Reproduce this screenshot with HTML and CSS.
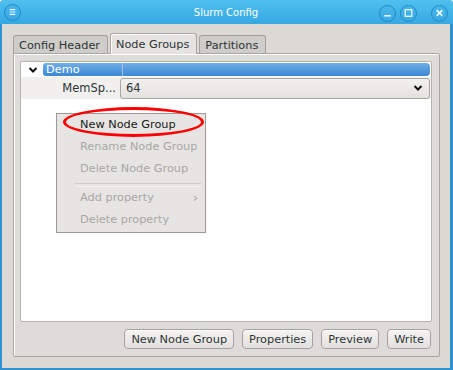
FILE: index.html
```html
<!DOCTYPE html>
<html lang="en">
<head>
    <meta charset="UTF-8">
    <title>Slurm Config</title>
    <link rel="stylesheet" href="styles.css">
</head>
<body>
    <div class="window">
        <div class="titlebar">
            <div class="tb-left">
                <span class="tb-btn">
                    <svg width="16" height="16" viewBox="0 0 16 16">
                        <path d="M5 5.5h6M5 8h6M5 10.5h6" stroke="#e8f6fd" stroke-width="1.3"/>
                    </svg>
                </span>
            </div>
            <div class="title">Slurm Config</div>
            <div class="tb-right">
                <span class="tb-btn">
                    <svg width="16" height="16" viewBox="0 0 16 16">
                        <path d="M4.5 11h7" stroke="#f2fafe" stroke-width="1.6"/>
                    </svg>
                </span>
                <span class="tb-btn">
                    <svg width="16" height="16" viewBox="0 0 16 16">
                        <rect x="4.5" y="4.5" width="7" height="7" fill="none" stroke="#f2fafe" stroke-width="1.3"/>
                    </svg>
                </span>
                <span class="tb-btn close">
                    <svg width="16" height="16" viewBox="0 0 16 16">
                        <path d="M5 5l6 6M11 5l-6 6" stroke="#f2fafe" stroke-width="1.7"/>
                    </svg>
                </span>
            </div>
        </div>

        <div class="content">
            <div class="tabs">
                <div class="tab">Config Header</div>
                <div class="tab active">Node Groups</div>
                <div class="tab">Partitions</div>
            </div>
            <div class="panel">
                <div class="tree">
                    <div class="row group-row">
                        <span class="expander">
                            <svg width="10" height="8" viewBox="0 0 10 8">
                                <path d="M1.5 2l3.5 3.5L8.5 2" fill="none" stroke="#111" stroke-width="2"/>
                            </svg>
                        </span>
                        <span class="group-name">Demo</span>
                        <span class="group-value"></span>
                    </div>
                    <div class="row prop-row">
                        <span class="prop-name">MemSp...</span>
                        <div class="combo">
                            <span>64</span>
                            <svg width="10" height="8" viewBox="0 0 10 8">
                                <path d="M1.5 2l3.5 3.5L8.5 2" fill="none" stroke="#111" stroke-width="2"/>
                            </svg>
                        </div>
                    </div>
                </div>
                <div class="actions">
                    <button class="btn">New Node Group</button>
                    <button class="btn">Properties</button>
                    <button class="btn">Preview</button>
                    <button class="btn">Write</button>
                </div>
            </div>
        </div>

        <!-- popup menu -->
        <div class="menu">
            <div class="menu-item">New Node Group</div>
            <div class="menu-item disabled">Rename Node Group</div>
            <div class="menu-item disabled">Delete Node Group</div>
            <div class="menu-sep"></div>
            <div class="menu-item disabled">Add property <span class="sub-arrow">&#8250;</span></div>
            <div class="menu-item disabled">Delete property</div>
        </div>
        <div class="highlight"></div>
    </div>
</body>
</html>
```

FILE: styles.css
```css
/* Reset */
* {
    margin: 0;
    padding: 0;
    box-sizing: border-box;
}

body {
    font-family: "DejaVu Sans", sans-serif;
    font-size: 11.3px;
    color: #2e3436;
    background: #ffffff;
}

/* Window frame */
.window {
    position: relative;
    width: 453px;
    height: 370px;
    display: flex;
    flex-direction: column;
    background: #2f93d2;
    padding: 0 3px 2px 2px;
    border-radius: 4px 4px 0 0;
}

.titlebar {
    height: 24px;
    margin: 0 -3px 0 -2px;
    padding: 0 3px 0 2px;
    display: grid;
    grid-template-columns: 1fr auto 1fr;
    align-items: center;
    background: linear-gradient(#50c0f0, #36a8e2);
    border-radius: 4px 4px 0 0;
}

.title {
    color: #ffffff;
    font-size: 10px;
    padding-top: 1px;
}

.tb-left {
    display: flex;
    padding-left: 2px;
}

.tb-right {
    display: flex;
    justify-content: flex-end;
    gap: 4px;
    padding-right: 2px;
    padding-top: 2px;
}

.tb-btn {
    width: 17px;
    height: 17px;
    border-radius: 50%;
    border: 1px solid #2486c2;
    background: linear-gradient(#47b6ea, #3aa9e2);
    display: flex;
    align-items: center;
    justify-content: center;
}

.tb-btn.close {
    margin-left: 10px;
}

/* Window body */
.content {
    flex: 1;
    background: #dcdad5;
    padding: 9px 10px 11px 11px;
    display: flex;
    flex-direction: column;
}

/* Notebook tabs */
.tabs {
    display: flex;
    align-items: flex-end;
    gap: 2px;
    height: 20px;
}

.tab {
    height: 18px;
    padding: 2px 7px 0 5px;
    background: #cfcdc9;
    border: 1px solid #a3a09b;
    border-bottom: none;
    border-radius: 3px 3px 0 0;
    line-height: 15px;
}

.tab.active {
    height: 21px;
    margin-bottom: -1px;
    padding-top: 3px;
    background: #e4e3e0;
    border-color: #a8a6a2;
    position: relative;
    z-index: 1;
    box-shadow: inset 1px 1px 0 #ffffff;
    line-height: 15px;
}

.panel {
    flex: 1;
    border: 1px solid #a8a6a2;
    border-radius: 0 2px 2px 2px;
    box-shadow: inset 1px 1px 0 #ffffff;
    background: #dedcd8;
    padding: 7px 7px 7px 6px;
    display: flex;
    flex-direction: column;
}

/* Tree view */
.tree {
    flex: 1;
    background: #ffffff;
    border: 1px solid #b5b3ae;
    border-radius: 2px;
    padding: 1px 1px 0 1px;
}

.row {
    display: flex;
    align-items: center;
}

.group-row {
    height: 13px;
}

.expander {
    width: 21px;
    display: flex;
    justify-content: center;
    padding-top: 1px;
}

.group-name {
    width: 80px;
    height: 13px;
    color: #ffffff;
    line-height: 13px;
    padding-left: 3px;
    background: linear-gradient(#70aee9, #3d86d1);
    border-radius: 3px 0 0 3px;
    border-right: 1px solid #9cc4ec;
}

.group-value {
    flex: 1;
    height: 13px;
    background: linear-gradient(#70aee9, #3d86d1);
    border-radius: 0 4px 4px 0;
}

.prop-row {
    height: 22px;
    margin: 1px -1px 0 -1px;
    background: #f1f0ef;
    padding-right: 1px;
}

.prop-name {
    width: 99px;
    text-align: right;
    padding-right: 4px;
    font-size: 11.5px;
}

.combo {
    flex: 1;
    height: 21px;
    display: flex;
    align-items: center;
    justify-content: space-between;
    padding: 0 6px 0 5px;
    border: 1px solid #a9a7a3;
    border-radius: 3px;
    background: linear-gradient(#f2f1f0, #e3e2df);
    font-size: 11.5px;
}

/* Bottom buttons */
.actions {
    display: flex;
    justify-content: flex-end;
    gap: 8px;
    padding-top: 7px;
    padding-right: 1px;
}

.btn {
    font-family: "DejaVu Sans", sans-serif;
    font-size: 11.3px;
    color: #2e3436;
    height: 20px;
    padding: 0 6px;
    border: 1px solid #a5a29d;
    border-radius: 4px;
    background: linear-gradient(#f4f3f2, #e2e1de);
    box-shadow: inset 0 1px 0 #ffffff;
}

/* Popup menu */
.menu {
    position: absolute;
    left: 56px;
    top: 113px;
    width: 150px;
    background: #e6e5e3;
    border: 1px solid #9c9a96;
    padding: 0 0 1px 0;
}

.menu-item {
    height: 22px;
    line-height: 22px;
    padding-left: 23px;
    color: #1a1a1a;
    position: relative;
}

.menu-item.disabled {
    color: #a9a7a3;
}

.menu-sep {
    margin: 3px 4px 0 18px;
    height: 4px;
    border-top: 1px solid #cfcdc9;
    border-bottom: 1px solid #f4f3f2;
}

.sub-arrow {
    position: absolute;
    right: 7px;
    top: 0;
    font-size: 13px;
    color: #a9a7a3;
}

/* Red hand-drawn ellipse round the first item */
.highlight {
    position: absolute;
    left: 63px;
    top: 107px;
    width: 141px;
    height: 30px;
    border: 3.5px solid #ff0000;
    border-radius: 50%;
    filter: blur(0.4px);
}
```
